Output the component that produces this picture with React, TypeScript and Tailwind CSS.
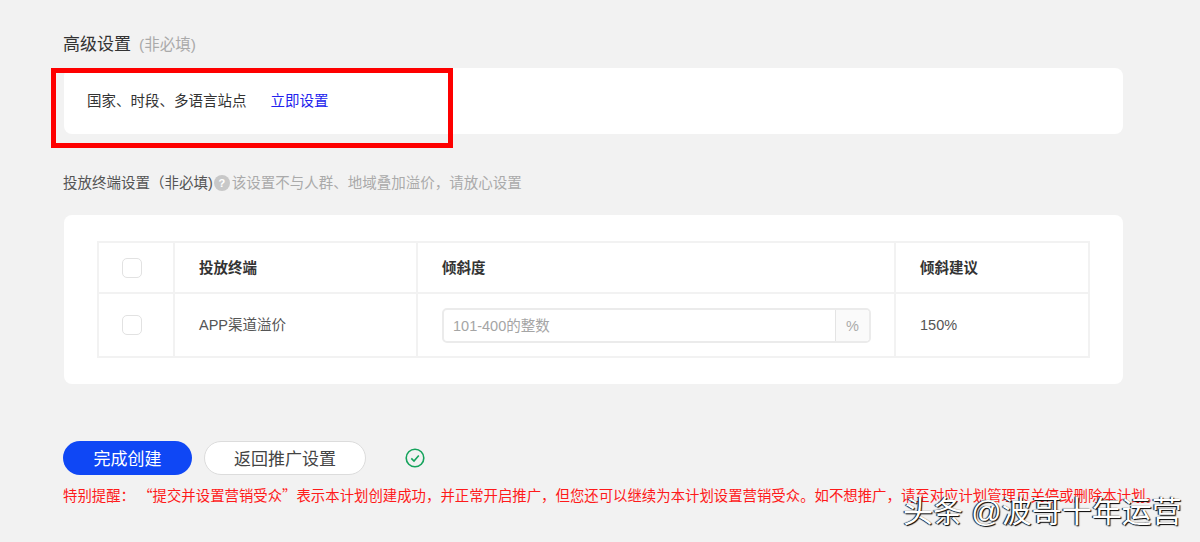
const FONT = "font-['Liberation_Sans','Noto_Sans_CJK_SC',sans-serif]";

function Checkbox() {
  return <span className="block w-5 h-5 bg-white rounded-[5px] border border-[#e2e2e2]" />;
}

export default function App() {
  return (
    <div className={`${FONT} relative h-[542px] w-[1200px] overflow-hidden bg-[#f2f2f2] pl-16 pt-[33px] text-[#333]`}>
      {/* 高级设置 */}
      <h2 className="h-[22px] pt-px text-[17px] leading-[22px] -ml-px">
        高级设置<span className="ml-2 text-[15.5px] text-[#aaa]">(非必填)</span>
      </h2>
      <div className="relative mt-[13px] flex h-[66px] w-[1059px] items-center rounded-lg bg-white pl-[23px] pt-0.5 text-[14.5px]">
        <span>国家、时段、多语言站点</span>
        <a className="ml-6 text-[#2222ee]">立即设置</a>
        {/* red annotation */}
        <div className="absolute left-[-13px] top-0 h-20 w-[402px] border-[5px] border-[#fe0000]" />
      </div>

      {/* 投放终端设置 */}
      <div className="mt-[39px] flex h-[20px] items-center text-[14.5px] leading-5 -ml-px">
        <span className="text-[#555]">投放终端设置（非必填)</span>
        <span className="ml-px flex h-4 w-4 items-center justify-center rounded-full bg-[#c8c8c8] text-[11px] font-bold text-white">?</span>
        <span className="ml-0.5 text-[#aaa]">该设置不与人群、地域叠加溢价，请放心设置</span>
      </div>
      <div className="mt-[22px] h-[169px] w-[1059px] rounded-lg bg-white pl-[33px] pt-[26px]">
        <table className="w-[991px] table-fixed border-collapse text-[14.5px]">
          <colgroup>
            <col className="w-[76px]" />
            <col className="w-[243px]" />
            <col className="w-[478px]" />
            <col className="w-[194px]" />
          </colgroup>
          <thead>
            <tr className="h-[51px] font-bold text-[#333]">
              <th className="border-2 border-[#f2f2f2]"><div className="flex pl-[23px]"><Checkbox /></div></th>
              <th className="border-2 border-[#f2f2f2] pl-6 pt-0.5 text-left">投放终端</th>
              <th className="border-2 border-[#f2f2f2] pl-6 pt-0.5 text-left">倾斜度</th>
              <th className="border-2 border-[#f2f2f2] pl-6 pt-0.5 text-left">倾斜建议</th>
            </tr>
          </thead>
          <tbody>
            <tr className="h-16 text-[#555]">
              <td className="border-2 border-[#f2f2f2]"><div className="flex pl-[23px]"><Checkbox /></div></td>
              <td className="border-2 border-[#f2f2f2] pl-6 pt-0.5">APP渠道溢价</td>
              <td className="border-2 border-[#f2f2f2] pl-6">
                <div className="flex h-[35px] w-[429px] overflow-hidden rounded-[5px] border-2 border-[#ebebeb]">
                  <span className="flex-1 pl-[9px] pt-px leading-[31px] text-[#a5a5a5]">101-400的整数</span>
                  <span className="w-[34px] border-l border-[#e4e4e4] bg-[#fafafa] pt-px text-center leading-[31px] text-[#aaa]">%</span>
                </div>
              </td>
              <td className="border-2 border-[#f2f2f2] pl-6 pt-0.5">150%</td>
            </tr>
          </tbody>
        </table>
      </div>

      {/* 底部按钮 */}
      <div className="mt-[57px] flex h-[34px] items-center -ml-px">
        <button className="h-[34px] w-[129px] rounded-full bg-[#0f47f5] pt-1 text-[17px] text-white">完成创建</button>
        <button className="ml-3 h-[34px] w-[162px] rounded-full border border-[#dcdcdc] bg-white pt-1 text-[17px] text-[#444]">返回推广设置</button>
        <svg className="ml-[39px] h-5 w-5" viewBox="0 0 20 20" fill="none">
          <circle cx="10" cy="10" r="8.8" stroke="#15a35c" strokeWidth="1.6" />
          <path d="M6.3 10.4l2.7 2.7 4.8-5.6" stroke="#15a35c" strokeWidth="1.6" />
        </svg>
      </div>
      <p className="mt-[10px] -ml-px whitespace-nowrap font-['Noto_Sans_CJK_SC',sans-serif] text-[14.4px] leading-5 text-[#fe1a1a]">
        特别提醒：&nbsp;“提交并设置营销受众”表示本计划创建成功，并正常开启推广，但您还可以继续为本计划设置营销受众。如不想推广，请至对应计划管理页关停或删除本计划。
      </p>

      {/* watermark */}
      <div className="absolute left-[903px] top-[494px] whitespace-nowrap text-[30px] leading-9 text-white [text-shadow:1px_1px_1px_#000,-1px_0_1px_#000]">
        头条 @波哥十年运营
      </div>
    </div>
  );
}
